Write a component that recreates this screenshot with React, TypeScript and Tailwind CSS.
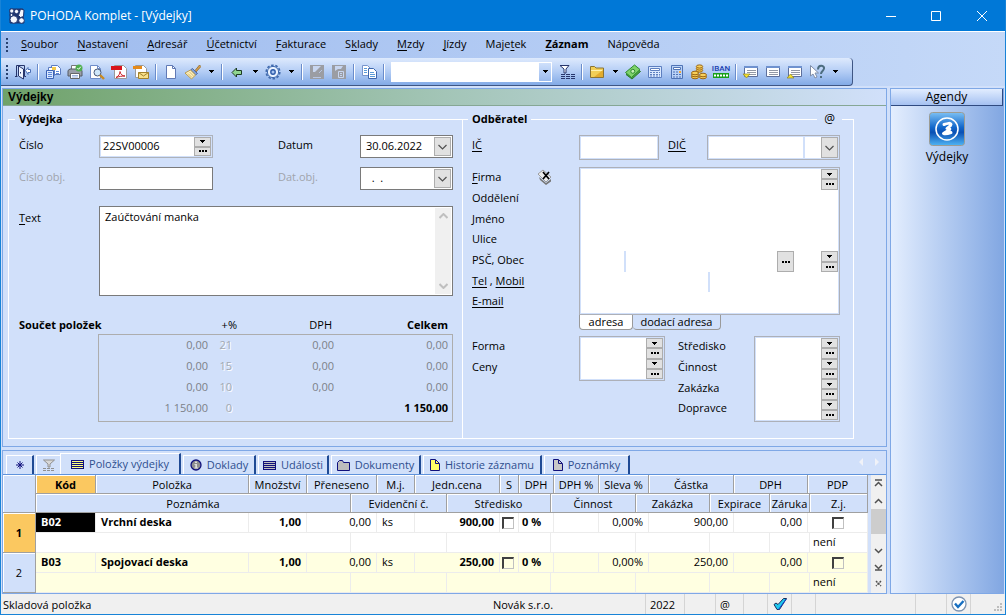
import { ReactNode } from "react";
import clsx from "clsx";

const menuItems = [
  "&Soubor",
  "&Nastavení",
  "&Adresář",
  "&Účetnictví",
  "&Fakturace",
  "S&klady",
  "&Mzdy",
  "&Jízdy",
  "Maje&tek",
  "&Záznam",
  "Náp&ověda",
];

const totals = [
  { base: "0,00", rate: "21", vat: "0,00", total: "0,00" },
  { base: "0,00", rate: "15", vat: "0,00", total: "0,00" },
  { base: "0,00", rate: "10", vat: "0,00", total: "0,00" },
  { base: "1 150,00", rate: "0", vat: "", total: "1 150,00" },
];

const items = [
  { code: "B02", name: "Vrchní deska", price: "900,00" },
  { code: "B03", name: "Spojovací deska", price: "250,00" },
];

// "&" marks the accelerator letter, as in resource files
function Mnemonic({ text }: { text: string }) {
  const at = text.indexOf("&");
  if (at < 0) return <>{text}</>;
  return (
    <>
      {text.slice(0, at)}
      <span className="underline underline-offset-2">{text[at + 1]}</span>
      {text.slice(at + 2)}
    </>
  );
}

/* ---------- icons ---------- */

function Icon({ children, size = 16 }: { children: ReactNode; size?: number }) {
  return (
    <svg width={size} height={size} viewBox="0 0 16 16" fill="none" aria-hidden="true" className="shrink-0">
      {children}
    </svg>
  );
}

const DoorIcon = () => (
  <Icon>
    <path d="M0 12.500h2.500M1.500 12.500v-11h8v11H11" stroke="#27356b" />
    <path d="M3.500 2l5 3v10l-5-3z" fill="#eef4ff" stroke="#27356b" />
    <path d="M5.500 8v1.500" stroke="#27356b" />
    <path d="M10.500 6.500l2.500-3v2h2.500v3H13v2z" fill="#fff" stroke="#4a6fb5" />
  </Icon>
);

const CopiesIcon = () => (
  <Icon>
    <path d="M6.500 1.500h6l3 3v6h-9z" fill="#fff" stroke="#5a7bc0" />
    <path d="M3.500 3.500h6v8h-6z" fill="#fff" stroke="#5a7bc0" />
    <path d="M1.500 6.500h7v8h-7z" fill="#dbe9ff" stroke="#3b62b5" />
    <path d="M7 3h4v3H7z" fill="#f3c94a" />
    <path d="M3 8.500h4M3 10.500h4M3 12.500h4M11 7.500h3M11 9.500h3" stroke="#5c86d8" />
  </Icon>
);

const PrinterIcon = () => (
  <Icon>
    <path d="M4.500 6V1.500h7V6" fill="#fff" stroke="#777" />
    <path d="M1 6.500l2-1.500h10l2 1.500V12H1z" fill="#9a9fa8" stroke="#555b66" />
    <path d="M3.500 9.500h9v5h-9z" fill="#fff" stroke="#666" />
    <path d="M5 11.500h6M5 13h6" stroke="#9fb4dd" />
    <circle cx="12" cy="4" r="3.500" fill="#4fae4f" />
    <path d="M10.300 4l1.300 1.300 2.200-2.600" stroke="#fff" />
  </Icon>
);

const PreviewIcon = () => (
  <Icon>
    <path d="M1.500 1.500h7l3 3v10h-10z" fill="#fff" stroke="#6f8cc9" />
    <path d="M8.500 1.500v3h3" stroke="#6f8cc9" />
    <circle cx="8.500" cy="8.500" r="3.500" fill="#cfe7fb" stroke="#4b5a78" />
    <path d="M11 11l4 4" stroke="#c98a22" strokeWidth="2.400" />
  </Icon>
);

const PdfIcon = () => (
  <Icon>
    <path d="M3.500 1.500h9l3 3v10h-12z" fill="#fff" stroke="#9a9a9a" />
    <path d="M0 2h11v4H0z" fill="#d8141c" />
    <path d="M5 13.500c3-1.500 4-4 4-6 .5 3 2.500 4.500 5 4.500-3 0-6 .5-9 1.500z" stroke="#c92027" />
  </Icon>
);

const MailPdfIcon = () => (
  <Icon>
    <path d="M2.500 1.500h8l3 3v9h-11z" fill="#fff" stroke="#9a9a9a" />
    <path d="M0 2h9v3H0z" fill="#e58a1a" />
    <path d="M5.500 8.500h10v6h-10z" fill="#f8e08a" stroke="#a4822a" />
    <path d="M5.500 8.500l5 3.500 5-3.500" stroke="#a4822a" />
  </Icon>
);

const NewDocIcon = () => (
  <Icon>
    <path d="M3.500 1.500h6l3 3v10h-9z" fill="#fff" stroke="#6079b5" />
    <path d="M9.500 1.500v3h3" stroke="#6079b5" />
  </Icon>
);

const BrushIcon = () => (
  <Icon>
    <path d="M10 6.500l4.500-5.500 1.500 1.500-5 5.500z" fill="#d9a04a" stroke="#8a6a35" strokeWidth=".8" />
    <path d="M7.500 4.500l5 5-2 1.500-5-5z" fill="#7f9fd8" stroke="#4d6aa5" />
    <path d="M5.500 6l5 5-4 4L0 9z" fill="#fff0ba" stroke="#b69a51" />
    <path d="M3 9.500l4 4M4.500 8l4.500 4.500" stroke="#d4ba72" />
  </Icon>
);

const BackIcon = () => (
  <Icon>
    <path d="M3 8.500l4.500-4.500v2.500h5v4h-5v2.500z" fill="#8fd48f" stroke="#1d3a22" />
  </Icon>
);

const GearIcon = () => (
  <Icon>
    <circle cx="8" cy="8" r="6.800" stroke="#3f69ad" strokeWidth="1.600" strokeDasharray="2.600 1.670" />
    <circle cx="8" cy="8" r="5.600" fill="#e9f2ff" stroke="#3f69ad" />
    <circle cx="8" cy="8" r="2.200" fill="#a8c4f0" stroke="#2d5aa8" strokeWidth="1.400" />
  </Icon>
);

const SaveIcon = () => (
  <Icon>
    <path d="M1 1h14v14H1z" fill="#9b9da3" />
    <path d="M4 2h8L6 8H4z" fill="#c8d6f0" />
    <path d="M4 13.500h8M10 9l3-3" stroke="#b8c6e2" />
  </Icon>
);

const SaveCopyIcon = () => (
  <Icon>
    <path d="M1 1h14v14H1z" fill="#9b9da3" />
    <path d="M4 2h8l-2 3H7L4 7z" fill="#c8d6f0" />
    <path d="M7.500 7.500h5v6h-5z" fill="#9b9da3" stroke="#c8d6f0" />
    <path d="M9 9.500h2M9 11.500h2" stroke="#c8d6f0" />
  </Icon>
);

const CopyIcon = () => (
  <Icon>
    <path d="M1.500 1.500h5l3 3v7h-8z" fill="#fff" stroke="#7794cc" />
    <path d="M7.500 4.500h5l3 3v7h-8z" fill="#fff" stroke="#3d66ad" />
    <path d="M3 4.500h3M3 6.500h3M3 8.500h3M9 8.500h4M9 10.500h5M9 12.500h5" stroke="#5c9bd8" />
  </Icon>
);

const FilterIcon = () => (
  <Icon>
    <path d="M1 1.500h9L7 5v4H5V5z" fill="#fff" stroke="#27356b" />
    <path d="M2 10.500h14M2 12.500h14M2 14.500h14" stroke="#27356b" strokeDasharray="4 1" />
  </Icon>
);

const FolderIcon = () => (
  <Icon>
    <path d="M1.500 2.500h4l1.500 1.500h7.500v9.500h-13z" fill="#f2cf57" stroke="#8a7434" />
    <path d="M2 7h12v-1H2z" fill="#fff3b0" />
    <path d="M14 6v7H5z" fill="#e3ac2d" />
  </Icon>
);

const MoneyIcon = () => (
  <Icon>
    <path d="M1 10.500l9-8 5.500 5-8.500 7.500z" fill="#4ba33f" stroke="#2c7a2b" />
    <path d="M.5 8.500l9-7.500 5.500 4.500-8.500 8z" fill="#7fd36a" stroke="#2f8a31" />
    <circle cx="7.800" cy="7.300" r="2" fill="#c6f0b5" stroke="#2f8a31" />
  </Icon>
);

const CalcTableIcon = () => (
  <Icon>
    <path d="M1.500 2.500h13v11h-13z" fill="#d9e8ff" stroke="#5d7fc0" />
    <path d="M3.500 4.500h9v2h-9z" fill="#fff" stroke="#5d7fc0" />
    <path d="M3 8.500h10M3 10.500h10M3 12h10" stroke="#5d7fc0" strokeDasharray="2 1" />
  </Icon>
);

const CalculatorIcon = () => (
  <Icon>
    <path d="M2.500 1.500h11v13h-11z" fill="#b9d2f7" stroke="#4f73b5" />
    <path d="M4.500 3.500h7v2h-7z" fill="#fff" stroke="#4f73b5" />
    <path d="M4 8h8M4 10.500h8M4 13h8" stroke="#4f73b5" strokeDasharray="2 1" />
    <path d="M10 7h2v2h-2z" fill="#f0a63c" />
  </Icon>
);

const CoinsIcon = () => (
  <Icon>
    <path d="M5.500 2.500v6h5v-6z" fill="#f0b63c" />
    <g fill="#f8cf5a" stroke="#9a6512">
      <ellipse cx="4" cy="13" rx="3.500" ry="1.800" />
      <ellipse cx="4" cy="11" rx="3.500" ry="1.800" />
      <ellipse cx="4" cy="9" rx="3.500" ry="1.800" />
      <ellipse cx="8.500" cy="6.500" rx="3.200" ry="1.600" />
      <ellipse cx="8.500" cy="4.500" rx="3.200" ry="1.600" />
      <ellipse cx="8.500" cy="2.500" rx="3.200" ry="1.600" />
      <ellipse cx="12" cy="13" rx="3.500" ry="1.800" />
      <ellipse cx="12" cy="11" rx="3.500" ry="1.800" />
    </g>
  </Icon>
);

const IbanIcon = () => (
  <span className="flex w-4 flex-col items-center">
    <span className="font-['Roboto','Liberation_Sans',sans-serif] text-[8px] leading-2 font-medium text-[#1b3fb0]">
      IBAN
    </span>
    <svg width="16" height="5" viewBox="0 0 16 5" aria-hidden="true">
      <path d="M0 0h16v5H0z" fill="#18a018" />
      <path d="M1 2.500h14" stroke="#fff" strokeWidth="2" strokeDasharray="2 1" />
    </svg>
  </span>
);

const PanelIcon = ({ marker }: { marker?: string }) => (
  <Icon>
    <path d="M1.500 2.500h13v10h-13z" fill="#fff" stroke="#5d6f9c" />
    <path d="M1 2h14v2H1z" fill="#6f92cf" />
    <path d="M4 6.500h9M4 8.500h9M4 10.500h9" stroke="#9298a5" />
    {marker && <path d={marker} fill="#f5e22b" stroke="#8b8128" strokeWidth=".7" />}
  </Icon>
);

const HelpIcon = () => (
  <Icon>
    <path d="M9 5.500c0-5 6.500-4.500 6-1C14.700 7 12 7 12 10" stroke="#4d6d80" strokeWidth="2" />
    <path d="M11 12h2v2h-2z" fill="#4d6d80" />
    <path d="M1.500 1.500v10.500l2.500-2 2 4 2-1-2-4h3.500z" fill="#fff" stroke="#7f8da8" />
  </Icon>
);

const DownTriangle = () => (
  <svg width="5" height="3" viewBox="0 0 5 3" shapeRendering="crispEdges" aria-hidden="true">
    <path d="M0 0h5v1H0zM1 1h3v1H1zM2 2h1v1H2z" fill="#000" />
  </svg>
);

const Dots = () => (
  <svg width="8" height="2" viewBox="0 0 8 2" shapeRendering="crispEdges" aria-hidden="true">
    <path d="M0 0h2v2H0zM3 0h2v2H3zM6 0h2v2H6z" fill="#000" />
  </svg>
);

const Chevron = ({ up, color = "#505050", weight = 1.2 }: { up?: boolean; color?: string; weight?: number }) => (
  <svg width="9" height="6" viewBox="0 0 9 6" fill="none" aria-hidden="true">
    <path d={up ? "M.5 5l4-4 4 4" : "M.5 1l4 4 4-4"} stroke={color} strokeWidth={weight} />
  </svg>
);

/* ---------- toolbar ---------- */

function Tool({ label, children }: { label: string; children: ReactNode }) {
  return (
    <button type="button" aria-label={label} className="flex h-6 w-[22px] items-center justify-center">
      {children}
    </button>
  );
}

function Drop({ label }: { label: string }) {
  return (
    <button type="button" aria-label={label} className="flex h-6 w-[14px] items-center justify-center">
      <DownTriangle />
    </button>
  );
}

function Separator() {
  return (
    <span className="flex w-2 justify-center">
      <span className="h-4 w-[2px] border-r border-white bg-[#6a8ccb]" />
    </span>
  );
}

function Grip() {
  return (
    <span className="flex w-[11px] justify-center">
      <svg width="2" height="14" viewBox="0 0 2 14" shapeRendering="crispEdges" aria-hidden="true">
        <path d="M1 0v14" stroke="#27416f" strokeWidth="2" strokeDasharray="2 2" />
      </svg>
    </span>
  );
}

function Toolbar() {
  return (
    <div className="flex">
      <div className="flex h-7 items-center rounded-r-sm border-r border-b border-[#3f5684] bg-linear-to-b from-[#deeafd] via-[#b4cdf5] to-[#82aae6] pr-[10px]">
        <Grip />
        <Tool label="Konec"><DoorIcon /></Tool>
        <Separator />
        <Tool label="Tiskové sestavy"><CopiesIcon /></Tool>
        <Tool label="Tisk"><PrinterIcon /></Tool>
        <Tool label="Náhled"><PreviewIcon /></Tool>
        <Tool label="Export do PDF"><PdfIcon /></Tool>
        <Tool label="Odeslat PDF"><MailPdfIcon /></Tool>
        <Separator />
        <Tool label="Nový"><NewDocIcon /></Tool>
        <Tool label="Štětec"><BrushIcon /></Tool>
        <Drop label="Možnosti štětce" />
        <Separator />
        <Tool label="Zpět"><BackIcon /></Tool>
        <Drop label="Historie" />
        <Tool label="Nastavení"><GearIcon /></Tool>
        <Drop label="Další nastavení" />
        <Separator />
        <Tool label="Uložit"><SaveIcon /></Tool>
        <Tool label="Uložit kopii"><SaveCopyIcon /></Tool>
        <Separator />
        <Tool label="Kopírovat"><CopyIcon /></Tool>
        <Separator />
        <div className="relative mr-1 ml-[3px] w-[161px] border border-white">
          <select aria-label="Hledat" className="block h-[18px] w-full appearance-none bg-white">
            <option></option>
          </select>
          <span className="pointer-events-none absolute inset-y-0 right-0 flex w-3 items-center justify-center bg-linear-to-b from-[#cfe0fb] to-[#9bbbee]">
            <DownTriangle />
          </span>
        </div>
        <Tool label="Filtr"><FilterIcon /></Tool>
        <Separator />
        <Tool label="Složka"><FolderIcon /></Tool>
        <Drop label="Další složky" />
        <Tool label="Platba"><MoneyIcon /></Tool>
        <Tool label="Tabulka"><CalcTableIcon /></Tool>
        <Tool label="Kalkulačka"><CalculatorIcon /></Tool>
        <Tool label="Měny"><CoinsIcon /></Tool>
        <Tool label="Kontrola účtu"><IbanIcon /></Tool>
        <Separator />
        <Tool label="Dolů"><PanelIcon marker="M0 10h7l-3.500 4z" /></Tool>
        <Tool label="Formulář"><PanelIcon /></Tool>
        <Tool label="Nahoru"><PanelIcon marker="M0 14h7l-3.500-4z" /></Tool>
        <Tool label="Co je to?"><HelpIcon /></Tool>
        <Drop label="Další nápověda" />
      </div>
    </div>
  );
}

/* ---------- form controls ---------- */

const smallButton = "flex items-center justify-center border border-[#adadad] bg-[#e1e1e1]";

function Spin({ label }: { label: string }) {
  return (
    <span className="flex w-[17px] shrink-0 flex-col self-stretch">
      <button type="button" aria-label={`${label} – seznam`} className={clsx(smallButton, "min-h-0 flex-1")}>
        <DownTriangle />
      </button>
      <button type="button" aria-label={`${label} – agenda`} className={clsx(smallButton, "min-h-0 flex-1")}>
        <Dots />
      </button>
    </span>
  );
}

function DateField({ id, value }: { id: string; value: string }) {
  return (
    <span className="flex h-[23px] w-[93px] border border-[#7a7a7a] bg-white p-px">
      <input id={id} defaultValue={value} className="min-w-0 flex-1 bg-transparent pl-1 outline-none" />
      <button type="button" aria-label="Kalendář" className={clsx(smallButton, "w-[17px]")}>
        <Chevron />
      </button>
    </span>
  );
}

function BlankInput({ id, className }: { id: string; className?: string }) {
  return <input id={id} className={clsx("min-w-0 bg-white px-1 outline-none", className)} />;
}

function VoucherFields() {
  return (
    <fieldset className="min-w-0 flex-1 border border-white pr-[9px] pl-[10px]">
      <legend className="-ml-1 px-1 leading-4 font-bold">Výdejka</legend>
      <div className="mt-2 flex">
        <label htmlFor="cislo" className="w-20 leading-5">Číslo</label>
        <span className="flex h-[23px] w-[114px] border border-[#adb2bb] bg-[#d1e0fa] p-px">
          <input id="cislo" defaultValue="22SV00006" className="min-w-0 flex-1 bg-white pl-[2px] outline-none" />
          <Spin label="Číslo" />
        </span>
        <span className="flex-1" />
        <label htmlFor="datum" className="w-[82px] leading-5">Datum</label>
        <DateField id="datum" value="30.06.2022" />
      </div>
      <div className="mt-[9px] flex text-[#a0a4ac]">
        <label htmlFor="cisloObj" className="w-20 leading-5">Číslo obj.</label>
        <input id="cisloObj" className="h-[23px] w-[114px] border border-[#7a7a7a] bg-white px-1 text-black outline-none" />
        <span className="flex-1" />
        <label htmlFor="datObj" className="w-[82px] leading-5">Dat.obj.</label>
        <span className="flex text-black">
          <DateField id="datObj" value="  .  ." />
        </span>
      </div>
      <div className="mt-4 flex">
        <label htmlFor="text" className="mt-[2px] w-20 leading-5">
          <Mnemonic text="&Text" />
        </label>
        <div className="flex h-[90px] flex-1 border border-[#7a7a7a] bg-white p-px">
          <textarea
            id="text"
            defaultValue="Zaúčtování manka"
            className="flex-1 resize-none overflow-hidden bg-white px-1 py-px leading-4 outline-none"
          />
          <div className="flex w-4 flex-col items-center justify-between bg-[#f0f0f0] py-[5px]">
            <Chevron up color="#bfbfbf" weight={2} />
            <Chevron color="#bfbfbf" weight={2} />
          </div>
        </div>
      </div>
      <div className="mt-5 flex text-right leading-[18px]">
        <span className="flex-1 text-left font-bold">Součet položek</span>
        <span className="w-[26px]">+%</span>
        <span className="w-[95px]">DPH</span>
        <span className="w-[121px] pr-[5px] font-bold">Celkem</span>
      </div>
      <div className="ml-[79px] h-[88px] border border-[#adadad]">
        <table className="w-full text-right text-[#7c8088]">
          <tbody>
            {totals.map((row) => (
              <tr key={row.rate} className="h-[21px]">
                <td>{row.base}</td>
                <td className="w-6 text-[#a3a8b2] [text-shadow:1px_1px_0_#fff]">{row.rate}</td>
                <td className="w-[102px]">{row.vat}</td>
                <td className={clsx("w-[118px] pr-1", row.rate === "0" && "font-bold text-black")}>
                  {row.total}
                </td>
              </tr>
            ))}
          </tbody>
        </table>
      </div>
    </fieldset>
  );
}

const fieldBox = "border border-[#adb0b8] bg-[#d1e0fa] p-px";

function CustomerFields() {
  return (
    <fieldset className="relative -ml-px w-[392px] border border-white pr-[13px] pb-4 pl-[9px]">
      <legend className="-ml-1 px-1 leading-4 font-bold">Odběratel</legend>
      <button
        type="button"
        aria-label="Zpráva"
        className="absolute -top-4 right-[11px] bg-[#d1e0fa] px-[7px] text-xs leading-4"
      >
        @
      </button>
      <div className="mt-2 flex">
        <label htmlFor="ic" className="w-[107px] leading-5 underline underline-offset-2">IČ</label>
        <span className={clsx(fieldBox, "flex h-[25px] w-20")}>
          <BlankInput id="ic" className="flex-1" />
        </span>
        <label htmlFor="dic" className="ml-[9px] leading-5 underline underline-offset-2">DIČ</label>
        <span className={clsx(fieldBox, "ml-auto flex h-[25px] w-[133px]")}>
          <BlankInput id="dic" className="mr-[2px] flex-1" />
          <span className="relative w-[33px]">
            <select aria-label="Typ DIČ" className="size-full appearance-none bg-white">
              <option></option>
            </select>
            <span className={clsx(smallButton, "pointer-events-none absolute inset-y-0 right-0 w-[17px]")}>
              <Chevron />
            </span>
          </span>
        </span>
      </div>

      <div className="mt-[7px] flex">
        <div className="grid h-[145px] w-[107px] shrink-0 grid-rows-7 items-center">
          <span className="flex items-center justify-between pr-[26px]">
            <label htmlFor="firma"><Mnemonic text="&Firma" /></label>
            <button type="button" aria-label="Odpojit adresu">
              <Icon>
                <path d="M2 8l7 6 5-4v2.500l-5 3.500-6-5z" fill="#777" />
                <path d="M1 5l5-4 8 7-5 5z" fill="#ececec" stroke="#8a8a8a" strokeWidth=".8" />
                <path d="M6 3l6 7M12 3l-6 7" stroke="#000" strokeWidth="1.700" />
              </Icon>
            </button>
          </span>
          <label htmlFor="oddeleni">Oddělení</label>
          <label htmlFor="jmeno">Jméno</label>
          <label htmlFor="ulice">Ulice</label>
          <span>
            <label htmlFor="psc">PSČ</label>, <label htmlFor="obec">Obec</label>
          </span>
          <span>
            <label htmlFor="tel" className="underline underline-offset-2">Tel</label>
            {" ,  "}
            <label htmlFor="mobil" className="underline underline-offset-2">Mobil</label>
          </span>
          <label htmlFor="email" className="underline underline-offset-2">E-mail</label>
        </div>
        <div>
          <div className={clsx(fieldBox, "grid h-[148px] w-[261px] grid-cols-1 grid-rows-7")}>
            <span className="flex bg-white">
              <BlankInput id="firma" className="flex-1" />
              <Spin label="Firma" />
            </span>
            <BlankInput id="oddeleni" />
            <BlankInput id="jmeno" />
            <BlankInput id="ulice" />
            <span className="flex bg-white">
              <BlankInput id="psc" className="w-[43px]" />
              <span className="w-[2px] bg-[#d1e0fa]" />
              <BlankInput id="obec" className="flex-1" />
              <button type="button" aria-label="Hledat obec" className={clsx(smallButton, "mr-[27px] w-[17px]")}>
                <Dots />
              </button>
              <Spin label="Obec" />
            </span>
            <span className="flex bg-white">
              <BlankInput id="tel" className="w-[127px]" />
              <span className="w-[2px] bg-[#d1e0fa]" />
              <BlankInput id="mobil" className="flex-1" />
            </span>
            <BlankInput id="email" />
          </div>
          <div className="flex leading-[14px]">
            <button type="button" className="w-[54px] rounded-b border-x border-b border-[#9a9a9a] bg-white">
              adresa
            </button>
            <button type="button" className="w-[88px] rounded-b border-r border-b border-[#9a9a9a]">
              dodací adresa
            </button>
          </div>
        </div>
      </div>

      <div className="mt-[6px] flex">
        <div className="grid h-[42px] w-[107px] grid-rows-2 items-center">
          <label htmlFor="forma">Forma</label>
          <label htmlFor="ceny">Ceny</label>
        </div>
        <div className={clsx(fieldBox, "grid h-[45px] w-[86px] grid-cols-1 grid-rows-2")}>
          {["forma", "ceny"].map((id) => (
            <span key={id} className="flex bg-white">
              <BlankInput id={id} className="flex-1" />
              <Spin label={id} />
            </span>
          ))}
        </div>
        <div className="ml-auto grid h-[83px] w-[76px] grid-rows-4 items-center">
          <label htmlFor="stredisko">Středisko</label>
          <label htmlFor="cinnost">Činnost</label>
          <label htmlFor="zakazka">Zakázka</label>
          <label htmlFor="dopravce">Dopravce</label>
        </div>
        <div className={clsx(fieldBox, "grid h-[86px] w-[86px] grid-cols-1 grid-rows-4")}>
          {["stredisko", "cinnost", "zakazka", "dopravce"].map((id) => (
            <span key={id} className="flex bg-white">
              <BlankInput id={id} className="flex-1" />
              <Spin label={id} />
            </span>
          ))}
        </div>
      </div>
    </fieldset>
  );
}

/* ---------- bottom tabs and grid ---------- */

const ListIcon = ({ fill }: { fill: string }) => (
  <svg width="13" height="9" viewBox="0 0 13 9" shapeRendering="crispEdges" aria-hidden="true">
    <path d="M0 0h13v9H0z" fill="#10107c" />
    <path d="M1 1h11v1H1zM1 3h11v1H1zM1 5h11v1H1zM1 7h11v1H1z" fill={fill} />
  </svg>
);

const InfoIcon = () => (
  <svg width="12" height="12" viewBox="0 0 12 12" aria-hidden="true">
    <circle cx="6" cy="6" r="5" fill="#8f8f8f" stroke="#10107c" strokeWidth="1.300" />
    <path d="M5 2.500h2V4H5zM4.500 5H7v3.500h1V9.500H4.500V8.500h.8V6h-.8z" fill="#ddd" />
  </svg>
);

const TabFolderIcon = () => (
  <svg width="13" height="11" viewBox="0 0 13 11" aria-hidden="true">
    <path d="M.5 10.500v-8l2-2h3l1 2h6v8z" fill="#bdbdbd" stroke="#10107c" />
  </svg>
);

const TabDocIcon = ({ fill }: { fill: string }) => (
  <svg width="10" height="12" viewBox="0 0 10 12" aria-hidden="true">
    <path d="M.5.500h5l4 4v7h-9z" fill={fill} stroke="#10107c" />
    <path d="M5.500 1v3.500H9" stroke="#10107c" fill="none" />
  </svg>
);

const tabs = [
  { label: "Doklady", width: "w-[73px]", icon: <InfoIcon /> },
  { label: "Události", width: "w-[71px]", icon: <ListIcon fill="#c0c0c0" /> },
  { label: "Dokumenty", width: "w-[90px]", icon: <TabFolderIcon /> },
  { label: "Historie záznamu", width: "w-[119px]", icon: <TabDocIcon fill="#ffff66" /> },
  { label: "Poznámky", width: "w-[86px]", icon: <TabDocIcon fill="#c8c8c8" /> },
];

const tabClass =
  "flex items-center justify-center gap-[5px] whitespace-nowrap border-t border-l border-white border-r-2 border-r-[#1f4a94]";

function Tabs() {
  return (
    <div className="flex h-6 items-end gap-[2px] border-b border-[#5f93dc] pl-[3px] text-[#2f4f8f]">
      <button type="button" aria-label="Vše" className={clsx(tabClass, "h-[19px] w-7")}>
        <svg width="8" height="8" viewBox="0 0 8 8" aria-hidden="true">
          <path d="M4 0v8M0 4h8M1.500 1.500l5 5M6.500 1.500l-5 5" stroke="#10107c" />
        </svg>
      </button>
      <div className="flex items-end">
        <button
          type="button"
          aria-label="Filtr"
          className="flex h-[19px] w-6 items-center justify-center border-t border-l border-white"
        >
          <svg width="12" height="12" viewBox="0 0 12 12" fill="none" aria-hidden="true">
            <path d="M.5 1h11L7 5v3H5V5z" fill="#d8d8d8" stroke="#909090" />
            <path d="M0 9.500h12M0 11.500h12" stroke="#909090" strokeDasharray="3 1" />
          </svg>
        </button>
        <button type="button" className={clsx(tabClass, "h-[21px] w-[121px]")}>
          <ListIcon fill="#ffff80" />
          Položky výdejky
        </button>
      </div>
      {tabs.map((tab) => (
        <button key={tab.label} type="button" className={clsx(tabClass, "h-[19px]", tab.width)}>
          {tab.icon}
          {tab.label}
        </button>
      ))}
      <svg width="20" height="8" viewBox="0 0 20 8" aria-hidden="true" className="mr-[7px] mb-2 ml-auto">
        <path d="M4 0v8L0 4zM16 0v8l4-4z" fill="#f0f2f8" />
      </svg>
    </div>
  );
}

// shared column edges: both header lines and both lines of a record snap to them
const colWidths = [33, 60, 153, 58, 44, 26, 38, 32, 53, 19, 32, 3, 45, 37, 13, 61, 24, 36, 38, 2, 58];

const headTop: [string, number][] = [
  ["Položka", 1],
  ["Množství", 1],
  ["Přeneseno", 2],
  ["M.j.", 1],
  ["Jedn.cena", 2],
  ["S", 1],
  ["DPH", 2],
  ["DPH %", 1],
  ["Sleva %", 2],
  ["Částka", 2],
  ["DPH", 2],
  ["PDP", 2],
];

const headBottom: [string, number][] = [
  ["Poznámka", 4],
  ["Evidenční č.", 3],
  ["Středisko", 3],
  ["Činnost", 3],
  ["Zakázka", 2],
  ["Expirace", 2],
  ["Záruka", 2],
  ["Z.j.", 1],
];

const headCell =
  "h-[19px] overflow-hidden whitespace-nowrap border-r border-b border-[#a0a0a0] p-0 pt-px text-center leading-4 shadow-[inset_1px_1px_0_#fff]";
const cell = "h-5 overflow-hidden whitespace-nowrap border-r border-b border-[#ececec] px-[5px] py-0";

function GridCheckbox({ label }: { label: string }) {
  return (
    <input
      type="checkbox"
      aria-label={label}
      className="block size-3 appearance-none border border-t-2 border-l-2 border-[#c0c0c0] border-t-[#404040] border-l-[#404040] checked:bg-black"
    />
  );
}

function ItemsGrid() {
  return (
    <table className="min-w-0 flex-1 table-fixed border-separate border-spacing-0">
      <colgroup>
        {colWidths.map((width, i) => (
          <col key={i} style={{ width }} />
        ))}
      </colgroup>
      <thead>
        <tr>
          <th rowSpan={2} className={headCell} />
          <th className={clsx(headCell, "bg-[#fbc860] font-bold")}>Kód</th>
          {headTop.map(([label, span], i) => (
            <th key={i} colSpan={span} className={clsx(headCell, "font-normal")}>{label}</th>
          ))}
        </tr>
        <tr>
          {headBottom.map(([label, span]) => (
            <th key={label} colSpan={span} className={clsx(headCell, "font-normal")}>{label}</th>
          ))}
        </tr>
      </thead>
      {items.map((item, i) => (
        <tbody key={item.code} className={i % 2 ? "bg-[#ffffe1]" : "bg-white"}>
          <tr>
            <th
              rowSpan={2}
              className={clsx(headCell, i === 0 ? "bg-[#fbc860] font-bold" : "bg-[#d1e0fa] font-normal")}
            >
              {i + 1}
            </th>
            <td className={clsx(cell, "font-bold", i === 0 && "bg-black text-white")}>{item.code}</td>
            <td className={clsx(cell, "font-bold")}>{item.name}</td>
            <td className={clsx(cell, "text-right font-bold")}>1,00</td>
            <td colSpan={2} className={clsx(cell, "text-right")}>0,00</td>
            <td className={cell}>ks</td>
            <td colSpan={2} className={clsx(cell, "text-right font-bold")}>{item.price}</td>
            <td className="border-r border-b border-[#ececec] p-0 pl-[2px]">
              <GridCheckbox label="Sleva" />
            </td>
            <td colSpan={2} className={clsx(cell, "pl-[3px] font-bold")}>0 %</td>
            <td className={cell} />
            <td colSpan={2} className={clsx(cell, "text-right")}>0,00%</td>
            <td colSpan={2} className={clsx(cell, "text-right")}>{item.price}</td>
            <td colSpan={2} className={clsx(cell, "text-right")}>0,00</td>
            <td colSpan={2} className={cell}>
              <span className="flex justify-center">
                <GridCheckbox label="PDP" />
              </span>
            </td>
          </tr>
          <tr>
            <td colSpan={4} className={cell} />
            <td colSpan={3} className={cell} />
            <td colSpan={3} className={cell} />
            <td colSpan={3} className={cell} />
            <td colSpan={2} className={cell} />
            <td colSpan={2} className={cell} />
            <td colSpan={2} className={cell} />
            <td className={clsx(cell, "pl-[3px]")}>není</td>
          </tr>
        </tbody>
      ))}
    </table>
  );
}

function GridScroll() {
  return (
    <div className="ml-[3px] flex w-[15px] flex-col items-center bg-[#f0f0f0]">
      <svg width="15" height="34" viewBox="0 0 15 34" fill="none" stroke="#505050" strokeWidth="1.500" aria-hidden="true">
        <path d="M4 5h7M4 11l3.500-3.500L11 11M4 28l3.500-3.500L11 28" />
      </svg>
      <div className="h-[25px] w-full bg-[#cdcdcd]" />
      <svg width="15" height="59" viewBox="0 0 15 59" fill="none" stroke="#505050" strokeWidth="1.500" aria-hidden="true">
        <path d="M4 15l3.500 3.500L11 15M4 31l3.500 3.500L11 31M4 36h7" />
        <path d="M5 47l5 5M10 47l-5 5" strokeDasharray="2 1" />
      </svg>
    </div>
  );
}

function Sidebar() {
  return (
    <aside className="ml-[3px] flex w-[114px] flex-col border border-[#7fa8e6] bg-linear-to-r from-[#e4eefe] to-[#82a7e2]">
      <h2 className="border-r border-b border-[#2f4a80] bg-linear-to-b from-[#e2edff] to-[#a5c1f1] text-center text-xs leading-4">
        Agendy
      </h2>
      <button type="button" className="flex flex-col items-center gap-px pt-[6px] text-xs leading-5">
        <svg width="36" height="34" viewBox="0 0 36 34" fill="none" aria-hidden="true">
          <defs>
            <linearGradient id="agenda" x1="0" y1="0" x2="0" y2="1">
              <stop offset="0" stopColor="#7cc0f4" />
              <stop offset=".45" stopColor="#1268cb" />
              <stop offset=".6" stopColor="#0a50b4" />
              <stop offset="1" stopColor="#4fb4f4" />
            </linearGradient>
          </defs>
          <rect x=".5" y=".5" width="35" height="33" rx="3" fill="url(#agenda)" stroke="#9c9c94" />
          <circle cx="18" cy="17" r="11" stroke="#fff" strokeWidth="1.500" />
          <path
            d="M15 12.500c3-1 7-2 7 0 0 1.500-3 3-4 4 2-.5 4 0 2 1.500s-4 2.500-5.500 3.500c2 1 5 0 7.500-1"
            stroke="#fff"
            strokeWidth="3"
            strokeLinejoin="round"
            strokeLinecap="round"
          />
        </svg>
        Výdejky
      </button>
    </aside>
  );
}

function StatusBar() {
  const divider = "border-l border-[#d4d4d4]";
  return (
    <footer className="flex h-5 items-stretch bg-[#f0f0f0] leading-[22px]">
      <span className="flex-1 pl-[2px]">Skladová položka</span>
      <span className="w-[244px] text-center">Novák s.r.o.</span>
      <span className={clsx(divider, "w-[39px] pl-1")}>2022</span>
      <span className={clsx(divider, "w-[31px]")} />
      <span className={clsx(divider, "w-7 pl-1")}>@</span>
      <span className={clsx(divider, "w-6")} />
      <span className={clsx(divider, "flex w-6 items-center justify-center")}>
        <svg width="14" height="14" viewBox="0 0 14 14" aria-hidden="true">
          <path d="M4 12.500L1 7.500 3 6l2 1.500 5.500-6H13.500L6.500 12.500z" fill="#1fc8ee" stroke="#0b1a4a" strokeWidth=".9" />
          <path d="M5.500 12.500L13.300 2" stroke="#1440c8" fill="none" />
        </svg>
      </span>
      <span className={clsx(divider, "w-6")} />
      <span className={clsx(divider, "w-[100px]")} />
      <span className={clsx(divider, "w-[31px]")} />
      <span className={clsx(divider, "flex w-6 items-center justify-center")}>
        <svg width="16" height="16" viewBox="0 0 16 16" fill="none" aria-hidden="true">
          <circle cx="8" cy="8" r="7" fill="#fff" stroke="#7d93b0" strokeWidth="1.300" />
          <path d="M4 7.500L7 11l5.500-6" stroke="#176fc1" strokeWidth="2.400" />
        </svg>
      </span>
      <span className={clsx(divider, "flex w-[35px] items-end justify-end pr-[2px] pb-[2px]")}>
        <svg width="9" height="9" viewBox="0 0 9 9" fill="#bdbdbd" aria-hidden="true">
          <path d="M6 0h2v2H6zM3 3h2v2H3zM6 3h2v2H6zM0 6h2v2H0zM3 6h2v2H3zM6 6h2v2H6z" />
        </svg>
      </span>
    </footer>
  );
}

function TitleBar() {
  return (
    <header className="flex h-[31px] items-center bg-[#0078d7] pl-2 text-xs text-white">
      <svg width="16" height="16" viewBox="0 0 16 16" fill="#f4f7ff" stroke="#1d3470" aria-hidden="true">
        <path d="M1 1h13v7l1 7H1z" fill="#1d3470" />
        <circle cx="2.800" cy="3" r="2.200" />
        <circle cx="7.500" cy="3.500" r="2.200" />
        <path d="M9.500 7.500L11.500 1l3.500 1-.5 6.500-3 1z" />
        <circle cx="2.500" cy="7" r="1.500" />
        <circle cx="4.800" cy="11.500" r="3.800" />
        <circle cx="12.500" cy="12.500" r="2.800" />
      </svg>
      <h1 className="ml-[5px]">POHODA Komplet - [Výdejky]</h1>
      <div className="ml-auto flex">
        <button type="button" aria-label="Minimalizovat" className="flex h-[30px] w-[45px] items-center justify-center">
          <svg width="10" height="10" viewBox="0 0 10 10" aria-hidden="true">
            <path d="M0 5.500h10" stroke="#fff" />
          </svg>
        </button>
        <button type="button" aria-label="Maximalizovat" className="flex h-[30px] w-[46px] items-center justify-center">
          <svg width="10" height="10" viewBox="0 0 10 10" fill="none" aria-hidden="true">
            <path d="M.5.500h9v9h-9z" stroke="#fff" />
          </svg>
        </button>
        <button type="button" aria-label="Zavřít" className="flex h-[30px] w-[46px] items-center justify-center">
          <svg width="10" height="10" viewBox="0 0 10 10" aria-hidden="true">
            <path d="M0 0l10 10M10 0L0 10" stroke="#fff" />
          </svg>
        </button>
      </div>
    </header>
  );
}

function App() {
  return (
    <div className="flex min-h-screen w-full flex-col border-x border-b border-[#1883d7] bg-[#d1e0fa] font-['Open_Sans','Noto_Sans',sans-serif] text-[11px] text-black">
      <TitleBar />
      <div className="border-t border-white bg-linear-to-r from-[#9ebbee] to-[#c5d9f8]">
        <nav className="flex h-[26px] items-center">
          <Grip />
          <div className="flex gap-[19px] pb-px pl-[9px]">
            {menuItems.map((item) => (
              <button key={item} type="button" className={clsx(item === "&Záznam" && "font-bold")}>
                <Mnemonic text={item} />
              </button>
            ))}
          </div>
        </nav>
        <Toolbar />
      </div>

      <div className="flex flex-1 px-px pt-[2px]">
        <main className="flex min-w-0 flex-1 flex-col gap-[3px]">
          <section className="border border-[#7fa8e6] pb-[7px]">
            <h2 className="h-[17px] border-b border-[#86a795] bg-linear-to-r from-[#6fa269] via-[#a3c5b7] to-[#d1e0fa] pl-[5px] font-['Liberation_Sans',Arial,sans-serif] text-xs leading-4 font-bold">
              Výdejky
            </h2>
            <div className="mt-[5px] mr-8 ml-[5px] flex">
              <VoucherFields />
              <CustomerFields />
            </div>
          </section>
          <section className="flex flex-1 flex-col border border-[#7fa8e6]">
            <Tabs />
            <div className="flex flex-1">
              <ItemsGrid />
              <GridScroll />
            </div>
          </section>
        </main>
        <Sidebar />
      </div>
      <StatusBar />
    </div>
  );
}

export default App;
